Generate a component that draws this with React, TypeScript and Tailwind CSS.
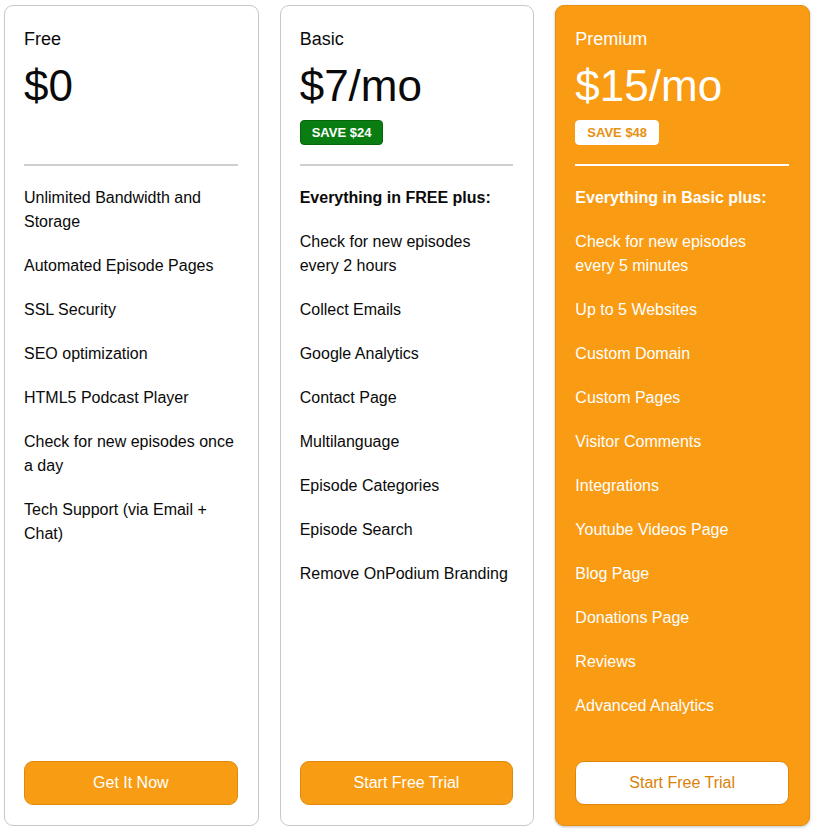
import { ReactNode } from 'react';

type Plan = {
  name: string;
  price: string;
  save?: string;
  lead?: string;
  features: string[];
  cta: string;
  featured?: boolean;
};

const plans: Plan[] = [
  {
    name: 'Free',
    price: '$0',
    features: [
      'Unlimited Bandwidth and Storage',
      'Automated Episode Pages',
      'SSL Security',
      'SEO optimization',
      'HTML5 Podcast Player',
      'Check for new episodes once a day',
      'Tech Support (via Email + Chat)',
    ],
    cta: 'Get It Now',
  },
  {
    name: 'Basic',
    price: '$7/mo',
    save: 'SAVE $24',
    lead: 'Everything in FREE plus:',
    features: [
      'Check for new episodes every 2 hours',
      'Collect Emails',
      'Google Analytics',
      'Contact Page',
      'Multilanguage',
      'Episode Categories',
      'Episode Search',
      'Remove OnPodium Branding',
    ],
    cta: 'Start Free Trial',
  },
  {
    name: 'Premium',
    price: '$15/mo',
    save: 'SAVE $48',
    lead: 'Everything in Basic plus:',
    features: [
      'Check for new episodes every 5 minutes',
      'Up to 5 Websites',
      'Custom Domain',
      'Custom Pages',
      'Visitor Comments',
      'Integrations',
      'Youtube Videos Page',
      'Blog Page',
      'Donations Page',
      'Reviews',
      'Advanced Analytics',
    ],
    cta: 'Start Free Trial',
    featured: true,
  },
];

function Feature({ children, bold }: { children: ReactNode; bold?: boolean }) {
  return (
    <li className={`mb-[20px] text-[16px] leading-[24px] ${bold ? 'font-bold' : ''}`}>{children}</li>
  );
}

function PlanCard({ plan }: { plan: Plan }) {
  const f = plan.featured;
  return (
    <div
      className={`flex h-[821px] flex-1 flex-col rounded-[9px] border pl-[19px] pr-[20px] pt-[20px] pb-[20px] ${
        f
          ? 'border-[#e8900f] bg-[#f99b13] text-white shadow-[0_1px_3px_rgba(0,0,0,0.25)]'
          : 'border-[#c8c8c8] bg-white text-[#0a0a0a]'
      }`}
    >
      <div className="h-[138px]">
        <div className="text-[18px] leading-[27px]">{plan.name}</div>
        <div className="mt-[8px] text-[44px] leading-[50px]">{plan.price}</div>
        {plan.save && (
          <span
            className={`mt-[9px] inline-block rounded-[4px] border px-[11px] text-[13px] font-bold leading-[23px] ${
              f ? 'border-white bg-white text-[#e8900f]' : 'border-[#06660a] bg-[#0a7d12] text-white'
            }`}
          >
            {plan.save}
          </span>
        )}
      </div>
      <div className={`h-[2px] ${f ? 'bg-white' : 'bg-[#cfcfcf]'}`} />
      <ul className="mt-[20px] pr-[2px]">
        {plan.lead && <Feature bold>{plan.lead}</Feature>}
        {plan.features.map((x) => (
          <Feature key={x}>{x}</Feature>
        ))}
      </ul>
      <button
        className={`mt-auto h-[44px] w-full rounded-[9px] border text-[16px] ${
          f
            ? 'border-[#e0870a] bg-white text-[#d98208]'
            : 'border-[#e0890c] bg-[#f89c14] text-white'
        }`}
      >
        {plan.cta}
      </button>
    </div>
  );
}

export default function App() {
  return (
    <div
      className="flex h-[829px] w-[814px] gap-[21px] bg-white px-[4px] pt-[5px] pb-[3px]"
      style={{ fontFamily: '"Liberation Sans", Arial, sans-serif' }}
    >
      {plans.map((p) => (
        <PlanCard key={p.name} plan={p} />
      ))}
    </div>
  );
}
